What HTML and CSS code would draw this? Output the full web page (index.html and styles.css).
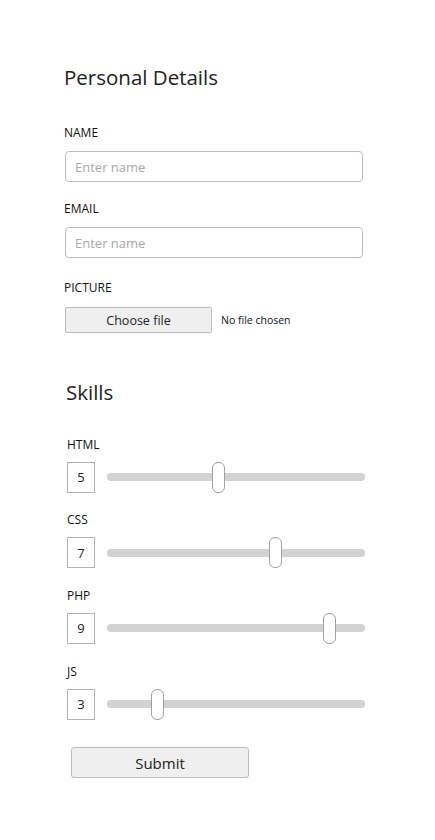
FILE: index.html
```html
<!DOCTYPE html>
<html lang="en">
<head>
<meta charset="utf-8">
<title>Form</title>
<link rel="stylesheet" href="styles.css">
</head>
<body>
<main class="form">
  <section class="personal">
    <h2 class="title">Personal Details</h2>
    <label class="field-label first" for="name">NAME</label>
    <input id="name" class="text-input" type="text" placeholder="Enter name">
    <label class="field-label" for="email">EMAIL</label>
    <input id="email" class="text-input" type="text" placeholder="Enter name">
    <span class="field-label picture-label">PICTURE</span>
    <div class="file-field">
      <label class="file-button" for="picture">Choose file</label>
      <span class="file-name">No file chosen</span>
      <input id="picture" class="file-input" type="file">
    </div>
  </section>
  <section class="skills">
    <h2 class="title skills-title">Skills</h2>
    <div class="skill-list">
      <div class="skill">
        <label class="skill-label" for="html">HTML</label>
        <div class="skill-row"><output class="score">5</output><input id="html" class="range" type="range" min="0" max="100" value="43"></div>
      </div>
      <div class="skill">
        <label class="skill-label" for="css">CSS</label>
        <div class="skill-row"><output class="score">7</output><input id="css" class="range" type="range" min="0" max="100" value="66"></div>
      </div>
      <div class="skill">
        <label class="skill-label" for="php">PHP</label>
        <div class="skill-row"><output class="score">9</output><input id="php" class="range" type="range" min="0" max="100" value="88"></div>
      </div>
      <div class="skill">
        <label class="skill-label" for="js">JS</label>
        <div class="skill-row"><output class="score">3</output><input id="js" class="range" type="range" min="0" max="100" value="18"></div>
      </div>
    </div>
  </section>
  <div class="actions">
    <button class="submit" type="submit">Submit</button>
  </div>
</main>
</body>
</html>
```
FILE: styles.css
```css
html, body {
  margin: 0;
  padding: 0;
  background: #fff;
}

body {
  font-family: "Open Sans", "Noto Sans", sans-serif;
  color: #222;
}

.title {
  margin: 0;
  font-size: 20.5px;
  line-height: 28px;
  font-weight: 400;
  color: #222;
}

.personal {
  display: flex;
  flex-direction: column;
  align-items: flex-start;
  padding: 63px 0 0 64px;
}

.field-label {
  font-size: 12px;
  line-height: 16px;
  color: #111;
  margin-top: 19px;
}

.field-label.first {
  margin-top: 34px;
}

.field-label.picture-label {
  margin-top: 22px;
}

.text-input {
  box-sizing: border-box;
  margin: 10px 0 0 1px;
  width: 298px;
  height: 31px;
  padding: 0 9px;
  border: 1px solid #bdbdbd;
  border-radius: 4px;
  font-family: "Open Sans", sans-serif;
  font-size: 13px;
  color: #222;
  background: #fff;
  outline: none;
}

.text-input::placeholder {
  color: #a9a9a9;
}

.file-field {
  display: flex;
  align-items: center;
  margin: 11px 0 0 1px;
}

.file-button {
  box-sizing: border-box;
  width: 147px;
  height: 26px;
  display: flex;
  align-items: center;
  justify-content: center;
  border: 1px solid #bdbdbd;
  border-radius: 2px;
  background: #efefef;
  font-size: 12.5px;
  color: #222;
}

.file-name {
  margin-left: 9px;
  font-size: 10.5px;
  color: #111;
}

.file-input {
  display: none;
}

.skills {
  padding: 45px 0 0 67px;
}

.skills-title {
  margin-left: -1px;
}

.skill-list {
  display: flex;
  flex-direction: column;
  gap: 19.7px;
  margin-top: 30.5px;
}

.skill-label {
  display: block;
  font-size: 12px;
  line-height: 16px;
  color: #111;
  margin-bottom: 9px;
}

.skill-row {
  display: flex;
  align-items: center;
}

.score {
  box-sizing: border-box;
  width: 28px;
  height: 31px;
  border: 1px solid #b0b0b0;
  display: flex;
  align-items: center;
  justify-content: center;
  font-size: 13px;
  color: #222;
}

.range {
  -webkit-appearance: none;
  appearance: none;
  margin: 0 0 0 12px;
  padding: 0;
  width: 258px;
  height: 31px;
  background: transparent;
}

.range::-webkit-slider-runnable-track {
  height: 8px;
  border-radius: 4px;
  background: #d3d3d3;
}

.range::-webkit-slider-thumb {
  -webkit-appearance: none;
  appearance: none;
  box-sizing: border-box;
  width: 13px;
  height: 31px;
  margin-top: -11.5px;
  border: 1px solid #a0a0a0;
  border-radius: 6px;
  background: #fff;
}

.actions {
  padding: 27.5px 0 0 71px;
}

.submit {
  box-sizing: border-box;
  width: 178px;
  height: 31px;
  border: 1px solid #bdbdbd;
  border-radius: 3px;
  background: #efefef;
  font-family: "Open Sans", sans-serif;
  font-size: 15px;
  color: #222;
}
```
